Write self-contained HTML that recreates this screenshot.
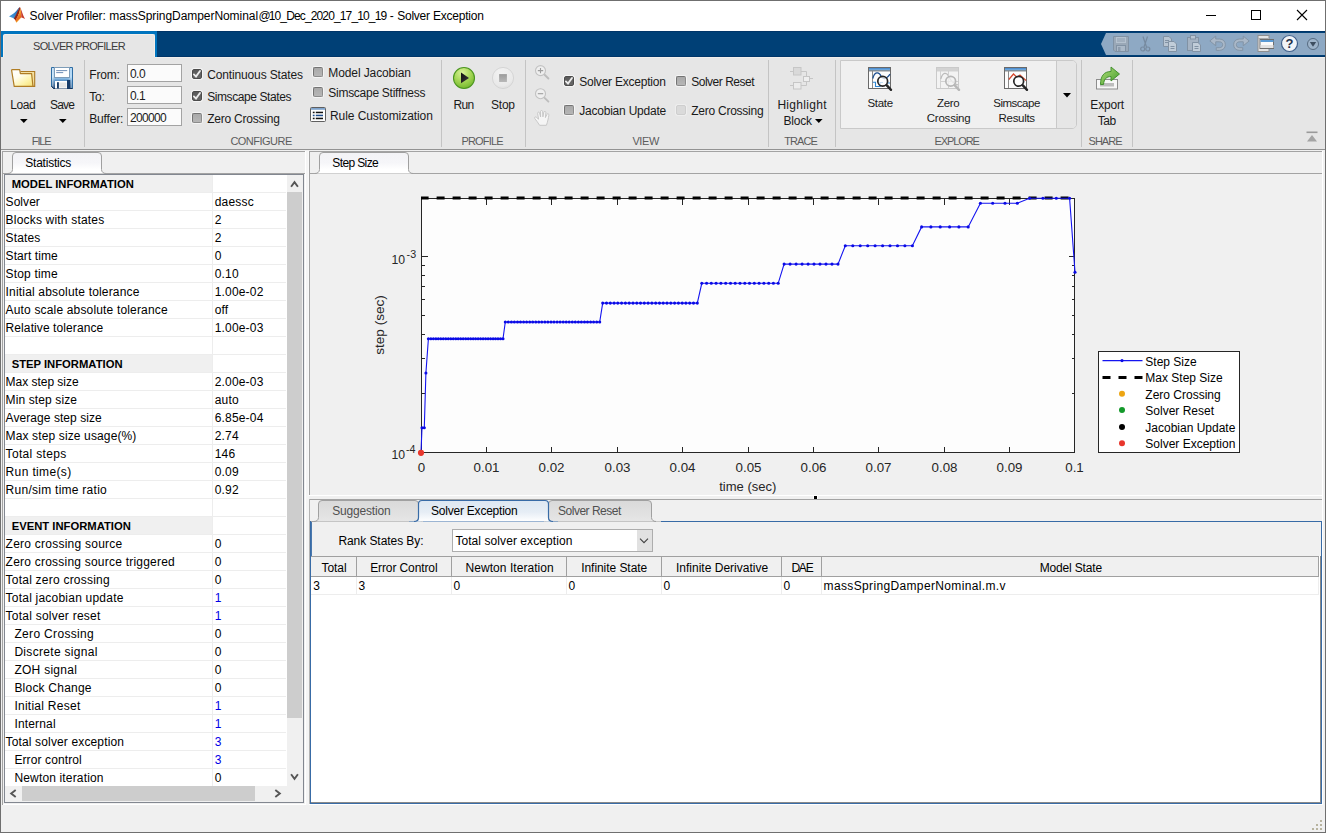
<!DOCTYPE html>
<html>
<head>
<meta charset="utf-8">
<title>Solver Profiler</title>
<style>
*{box-sizing:border-box;margin:0;padding:0}
html,body{width:1326px;height:833px;overflow:hidden;background:#f0f0f0}
body{position:relative;font-family:"Liberation Sans","DejaVu Sans",sans-serif;font-size:12px;color:#000}
.a{position:absolute}
.t{position:absolute;white-space:nowrap;line-height:1}
</style>
</head>
<body>
<!-- window frame -->
<div class="a" id="titlebar" style="left:0;top:0;width:1326px;height:31px;background:#fff"></div>
<div class="a" style="left:0;top:0;width:1326px;height:1px;background:#6f6f6f"></div>
<div class="a" style="left:0;top:0;width:1px;height:833px;background:#6f6f6f"></div>
<div class="a" style="left:1325px;top:0;width:1px;height:833px;background:#6f6f6f"></div>
<div class="a" style="left:0;top:832px;width:1326px;height:1px;background:#6f6f6f"></div>

<!-- TITLE -->
<svg class="a" style="left:8px;top:6px" width="19" height="18" viewBox="8 6 19 18">
<defs><linearGradient id="lg1" x1="0" y1="0" x2="0.3" y2="1"><stop offset="0" stop-color="#f0902a"/><stop offset="0.5" stop-color="#f2a030"/><stop offset="0.8" stop-color="#e8641e"/><stop offset="1" stop-color="#f5b82a"/></linearGradient>
<linearGradient id="lg2" x1="0" y1="1" x2="1" y2="0"><stop offset="0" stop-color="#4a9fdc"/><stop offset="0.6" stop-color="#2f7cc4"/><stop offset="1" stop-color="#27508f"/></linearGradient></defs>
<path d="M9 16.6 C11 15 13.3 14 14.8 12.6 C16.4 11 18.2 8.6 19.6 7 L17.6 12.6 L14.3 18.9 C12.6 17.8 11 17.2 9 16.6 Z" fill="url(#lg2)"/>
<path d="M19.7 7 C18.3 10 16.3 14.4 13.9 18.6 L15.6 20.6 C17.9 17 19.8 12 20.4 8 Z" fill="#8f2417"/>
<path d="M20.2 7.4 C19.9 11 18.6 15.6 15.3 20.2 L16.3 22.7 C18.5 21 20 18.6 21.4 17.3 C21.6 14 21.1 10 20.1 7.4 Z" fill="url(#lg1)"/>
<path d="M20 7.1 C21.6 10 22.6 15 25 19 C23.6 18 22.4 17.5 21.3 17.4 C21.5 14 20.9 10 20 7.1 Z" fill="#c63a2a"/>
</svg>
<div class="t" style="left:29.60px;top:10.00px;font-size:12px;letter-spacing:-0.168px;color:#000;">Solver Profiler:</div>
<div class="t" style="left:109.30px;top:10.00px;font-size:12px;letter-spacing:-0.059px;color:#000;">massSpringDamperNominal</div>
<div class="t" style="left:258.40px;top:10.00px;font-size:12px;letter-spacing:-0.582px;color:#000;">@</div>
<div class="t" style="left:268.70px;top:10.00px;font-size:12px;letter-spacing:-0.860px;color:#000;">10_Dec_2020_17_10_19</div>
<div class="t" style="left:389.70px;top:10.00px;font-size:12px;letter-spacing:0.504px;color:#000;">-</div>
<div class="t" style="left:397.20px;top:10.00px;font-size:12px;letter-spacing:-0.228px;color:#000;">Solver Exception</div>
<svg class="a" style="left:1195px;top:1px" width="130" height="30" viewBox="0 0 130 30" shape-rendering="crispEdges">
<rect x="11" y="14" width="10" height="1" fill="#000"/>
<rect x="56.5" y="9.5" width="9" height="9" fill="none" stroke="#000" stroke-width="1"/>
<g shape-rendering="auto"><path d="M102 9 L112 19 M112 9 L102 19" stroke="#000" stroke-width="1.1" fill="none"/></g>
</svg>
<div class="a" style="left:1px;top:31px;width:1324px;height:26px;background:#004076;"></div>
<div class="a" style="left:1px;top:31px;width:156px;height:26px;background:#0075bf;"></div>
<div class="a" style="left:1px;top:31px;width:1324px;height:1px;background:#003568;"></div>
<div class="a" style="left:157px;top:56px;width:1168px;height:1px;background:#003568;"></div>
<div class="a" style="left:1px;top:31px;width:156px;height:1px;background:#0072bd;"></div>
<div class="a" style="left:3px;top:34px;width:152px;height:23px;background:#e6e6e6;border-radius:2px 2px 0 0;border-top:1px solid #f4efea;border-right:1px solid #f4efea;border-left:1px solid #f4efea;"></div>
<div class="t" style="left:33.00px;top:41.00px;font-size:11px;letter-spacing:-0.659px;color:#3c3c3c;">SOLVER PROFILER</div>
<svg class="a" style="left:1100px;top:33px" width="225" height="22" viewBox="0 0 225 22">
<path d="M1 11 L6 0 H225 V22 H6 Z" fill="#8ea9c4"/>
<g opacity="0.72">
<!-- save -->
<g transform="translate(13,3)"><path d="M0.5 0.5 H15.5 V15.5 H2 L0.5 14 Z" fill="#9fa8b3" stroke="#7d8a99"/><rect x="3" y="1" width="10" height="6" fill="#c5ccd4"/><rect x="4" y="2.5" width="8" height="1" fill="#8d98a5"/><rect x="4" y="4.5" width="8" height="1" fill="#8d98a5"/><rect x="3.5" y="9.5" width="9" height="6" fill="#b7c0ca" stroke="#7d8a99"/><rect x="5" y="11" width="2.5" height="4" fill="#8d98a5"/></g>
<!-- cut -->
<g transform="translate(39,3)" fill="none" stroke="#6e7f92" stroke-width="1.2"><path d="M4 0.5 L7.5 11 M8.5 0.5 L5 11"/><circle cx="3.7" cy="13" r="2"/><circle cx="8.8" cy="13" r="2"/></g>
<!-- copy -->
<g transform="translate(63,3)"><path d="M0.5 0.5 H6 L8.5 3 V10.5 H0.5 Z" fill="#c9d0d8" stroke="#7d8a99"/><path d="M5.5 5.5 H11 L13.5 8 V15.5 H5.5 Z" fill="#d5dbe2" stroke="#7d8a99"/><path d="M2 4.5H6M2 6.5H5M7.5 10.5H11.5M7.5 12.5H11.5" stroke="#7d8a99"/></g>
<!-- paste -->
<g transform="translate(87,2)"><rect x="0.5" y="2.5" width="11" height="13" fill="#aeb8c3" stroke="#7d8a99"/><rect x="3.5" y="0.5" width="5" height="3.5" fill="#c9d0d8" stroke="#7d8a99"/><path d="M5.5 7.5 H11 L13.5 10 V16.5 H5.5 Z" fill="#d5dbe2" stroke="#7d8a99"/><path d="M7.5 11.5H11.5M7.5 13.5H11.5" stroke="#7d8a99"/></g>
<!-- undo -->
<g transform="translate(109.3,2.6) scale(1.07)"><path d="M0.5 5 L6 0.5 V3.2 H9.5 C13 3.2 15 5.5 15 8.5 C15 11.5 13 13.8 9.5 13.8 H6.5 V11.3 H9.3 C11.4 11.3 12.5 10.2 12.5 8.5 C12.5 6.8 11.4 5.8 9.3 5.8 H6 V9.5 Z" fill="#b5bfca" stroke="#7d8a99" stroke-width="0.9"/></g>
<!-- redo -->
<g transform="translate(149.7,2.6) scale(-1.07,1.07)"><path d="M0.5 5 L6 0.5 V3.2 H9.5 C13 3.2 15 5.5 15 8.5 C15 11.5 13 13.8 9.5 13.8 H6.5 V11.3 H9.3 C11.4 11.3 12.5 10.2 12.5 8.5 C12.5 6.8 11.4 5.8 9.3 5.8 H6 V9.5 Z" fill="#b5bfca" stroke="#7d8a99" stroke-width="0.9"/></g>
</g>
<!-- window switch -->
<g transform="translate(156.5,2)"><rect x="1.5" y="0.5" width="11" height="16" fill="#e4e4e4" stroke="#8f8f8f"/><path d="M2 3.5 H12" stroke="#a9a9a9"/><rect x="3.5" y="4.5" width="13.5" height="9" fill="#fafafa" stroke="#6e6e6e"/><rect x="4" y="5" width="13" height="2" fill="#5b9bd5"/><rect x="4" y="10" width="13" height="3" fill="#e2e2e2"/></g>
<!-- help -->
<g transform="translate(181,2)"><circle cx="8.5" cy="8.5" r="8" fill="#f2f4f7" stroke="#3f5f8a" stroke-width="1.2"/><text x="8.5" y="13" font-family="Liberation Sans, sans-serif" font-size="13" font-weight="bold" text-anchor="middle" fill="#1f2f4a">?</text></g>
<!-- dropdown -->
<g transform="translate(207,5)"><circle cx="6" cy="6" r="5.5" fill="#9eb4ca" stroke="#566a80" stroke-width="1"/><path d="M2.8 4 H9.2 L6 8.8 Z" fill="#3e4e60"/></g>
</svg>

<!-- TABBAR -->

<!-- TOOLSTRIP -->
<div class="a" style="left:1px;top:57px;width:1324px;height:92px;background:#e6e6e6;"></div>
<div class="a" style="left:155px;top:57px;width:1170px;height:1px;background:#f1eeeb;"></div>
<div class="a" style="left:1px;top:149px;width:1324px;height:1px;background:#929292;"></div>
<svg class="a" style="left:10px;top:67px" width="27" height="22" viewBox="10 67 27 22">
<defs><linearGradient id="fo1" x1="0.1" y1="0" x2="0.9" y2="1"><stop offset="0" stop-color="#ffffff"/><stop offset="0.35" stop-color="#fffdf0"/><stop offset="0.75" stop-color="#fdf2a4"/><stop offset="1" stop-color="#f6e27c"/></linearGradient></defs>
<path d="M20.5 71.5 H34.7 V86.4 H32.5" fill="#f3dfa0" stroke="#ad7a22" stroke-width="1.1"/>
<path d="M12 69.6 H19.7 L20.4 73.7 H31.6 L33 86.4 H14.2 L11.6 70.2 Z" fill="url(#fo1)" stroke="#b07d24" stroke-width="1.2" stroke-linejoin="round"/>
</svg>
<svg class="a" style="left:51px;top:67px" width="22" height="22" viewBox="0 0 22 22">
<defs><linearGradient id="sv1" x1="0" y1="0" x2="0" y2="1"><stop offset="0" stop-color="#9cc8ec"/><stop offset="0.45" stop-color="#a9d3f3"/><stop offset="0.62" stop-color="#5e95c8"/><stop offset="1" stop-color="#173c69"/></linearGradient>
<linearGradient id="sv2" x1="0" y1="0" x2="1" y2="0"><stop offset="0" stop-color="#ffffff" stop-opacity="0.55"/><stop offset="0.15" stop-color="#ffffff" stop-opacity="0"/><stop offset="0.8" stop-color="#ffffff" stop-opacity="0"/><stop offset="1" stop-color="#bfe0fa" stop-opacity="0.6"/></linearGradient></defs>
<path d="M0.5 0.5 H21.5 V21.5 H2.5 L0.5 19.5 Z" fill="url(#sv1)" stroke="#2e6da4" stroke-width="1"/>
<path d="M1 1 H21 V21 H3 L1 19 Z" fill="url(#sv2)"/>
<path d="M0.5 19.5 L2.5 21.5 H21.5" fill="none" stroke="#12335c" stroke-width="1"/>
<rect x="3.5" y="0.5" width="15" height="10" fill="#ffffff" stroke="#7d9cb8" stroke-width="1"/>
<rect x="5.2" y="3.2" width="11" height="0.9" fill="#5f82ad"/><rect x="5.2" y="5.2" width="7" height="0.9" fill="#5f82ad"/>
<rect x="16" y="13" width="3.2" height="8.5" fill="#173c69"/>
<rect x="4" y="14" width="12" height="7.5" fill="#ffffff"/>
<rect x="6" y="15.2" width="1.9" height="6.3" fill="#173c69"/>
<rect x="8.3" y="15.5" width="7.2" height="5" fill="#e6e6e6"/>
</svg>
<div class="t" style="left:10.30px;top:99.00px;font-size:12px;letter-spacing:-0.399px;color:#1a1a1a;">Load</div>
<div class="t" style="left:50.10px;top:99.00px;font-size:12px;letter-spacing:-0.863px;color:#1a1a1a;">Save</div>
<svg class="a" style="left:20.2px;top:118.5px" width="7.6" height="4" viewBox="0 0 7.6 4"><path d="M0 0 H7.6 L3.8 4 Z" fill="#000"/></svg>
<svg class="a" style="left:59.2px;top:118.5px" width="7.6" height="4" viewBox="0 0 7.6 4"><path d="M0 0 H7.6 L3.8 4 Z" fill="#000"/></svg>
<div class="t" style="left:31.80px;top:136.00px;font-size:11px;letter-spacing:-1.108px;color:#5c5c5c;">FILE</div>
<div class="a" style="left:84px;top:60px;width:1px;height:87px;background:#c4c4c4;"></div>
<div class="t" style="left:89.30px;top:69.00px;font-size:12px;letter-spacing:-0.206px;color:#1a1a1a;">From:</div>
<div class="t" style="left:89.30px;top:91.00px;font-size:12px;letter-spacing:-0.236px;color:#1a1a1a;">To:</div>
<div class="t" style="left:89.30px;top:113.00px;font-size:12px;letter-spacing:-0.176px;color:#1a1a1a;">Buffer:</div>
<div class="a" style="left:127px;top:64px;width:55px;height:18px;background:#fbfbfb;border:1px solid #a3a3a3;"></div>
<div class="a" style="left:127px;top:86px;width:55px;height:18px;background:#fbfbfb;border:1px solid #a3a3a3;"></div>
<div class="a" style="left:127px;top:108px;width:55px;height:18px;background:#fbfbfb;border:1px solid #a3a3a3;"></div>
<div class="t" style="left:130.00px;top:68.00px;font-size:12px;letter-spacing:-0.561px;color:#1a1a1a;">0.0</div>
<div class="t" style="left:130.00px;top:90.00px;font-size:12px;letter-spacing:-0.561px;color:#1a1a1a;">0.1</div>
<div class="t" style="left:130.00px;top:112.00px;font-size:12px;letter-spacing:-0.691px;color:#1a1a1a;">200000</div>
<div class="a" style="left:191px;top:68px;width:12px;height:12px;background:#f5f5f5;border-radius:3px"></div><div class="a" style="left:192px;top:69px;width:10px;height:10px;background:linear-gradient(#5a5a5a,#686868);border:1px solid #4c4c4c;border-radius:2px"></div><svg class="a" style="left:192px;top:69px" width="10" height="10" viewBox="0 0 10 10"><path d="M1.9 5.4 L4 7.6 L8 2" fill="none" stroke="#ececec" stroke-width="1.9" stroke-linecap="round"/></svg>
<div class="a" style="left:191px;top:90px;width:12px;height:12px;background:#f5f5f5;border-radius:3px"></div><div class="a" style="left:192px;top:91px;width:10px;height:10px;background:linear-gradient(#5a5a5a,#686868);border:1px solid #4c4c4c;border-radius:2px"></div><svg class="a" style="left:192px;top:91px" width="10" height="10" viewBox="0 0 10 10"><path d="M1.9 5.4 L4 7.6 L8 2" fill="none" stroke="#ececec" stroke-width="1.9" stroke-linecap="round"/></svg>
<div class="a" style="left:191px;top:112px;width:12px;height:12px;background:#f5f5f5;border-radius:3px"></div><div class="a" style="left:192px;top:113px;width:10px;height:10px;background:linear-gradient(#a9a9a9,#b6b6b6);border:1px solid #747474;border-bottom-color:#8c8c8c;border-right-color:#8c8c8c;border-radius:2px"></div>
<div class="t" style="left:207.20px;top:69.00px;font-size:12px;letter-spacing:-0.139px;color:#1a1a1a;">Continuous States</div>
<div class="t" style="left:207.20px;top:91.00px;font-size:12px;letter-spacing:-0.416px;color:#1a1a1a;">Simscape States</div>
<div class="t" style="left:207.20px;top:113.00px;font-size:12px;letter-spacing:-0.228px;color:#1a1a1a;">Zero Crossing</div>
<div class="a" style="left:312px;top:66px;width:12px;height:12px;background:#f5f5f5;border-radius:3px"></div><div class="a" style="left:313px;top:67px;width:10px;height:10px;background:linear-gradient(#a9a9a9,#b6b6b6);border:1px solid #747474;border-bottom-color:#8c8c8c;border-right-color:#8c8c8c;border-radius:2px"></div>
<div class="a" style="left:312px;top:86px;width:12px;height:12px;background:#f5f5f5;border-radius:3px"></div><div class="a" style="left:313px;top:87px;width:10px;height:10px;background:linear-gradient(#a9a9a9,#b6b6b6);border:1px solid #747474;border-bottom-color:#8c8c8c;border-right-color:#8c8c8c;border-radius:2px"></div>
<div class="t" style="left:328.30px;top:67.00px;font-size:12px;letter-spacing:-0.104px;color:#1a1a1a;">Model Jacobian</div>
<div class="t" style="left:328.30px;top:87.00px;font-size:12px;letter-spacing:-0.274px;color:#1a1a1a;">Simscape Stiffness</div>
<svg class="a" style="left:310px;top:107px" width="16" height="15" viewBox="0 0 16 15">
<rect x="0.5" y="0.5" width="15" height="14" rx="1" fill="#fdfdfd" stroke="#5f5f5f"/>
<rect x="1" y="1" width="14" height="1.8" fill="#7ea3cc"/>
<rect x="2.8" y="4.7" width="1.8" height="1.5" fill="#111"/><rect x="5.8" y="4.7" width="7.2" height="1.5" fill="#111"/>
<rect x="2.8" y="7.7" width="1.8" height="1.5" fill="#1f4e8c"/><rect x="5.8" y="7.7" width="7.2" height="1.5" fill="#1f4e8c"/>
<rect x="2.8" y="10.7" width="1.8" height="1.5" fill="#111"/><rect x="5.8" y="10.7" width="7.2" height="1.5" fill="#111"/>
</svg>
<div class="t" style="left:330.00px;top:110.00px;font-size:12px;letter-spacing:-0.069px;color:#1a1a1a;">Rule Customization</div>
<div class="t" style="left:230.40px;top:136.00px;font-size:11px;letter-spacing:-0.522px;color:#5c5c5c;">CONFIGURE</div>
<div class="a" style="left:441px;top:60px;width:1px;height:87px;background:#c4c4c4;"></div>
<svg class="a" style="left:452px;top:66px" width="24" height="24" viewBox="452 66 24 24">
<defs><radialGradient id="rg1" cx="0.42" cy="0.25" r="0.85"><stop offset="0" stop-color="#d9f29a"/><stop offset="0.45" stop-color="#a9d95a"/><stop offset="0.8" stop-color="#7fbf36"/><stop offset="1" stop-color="#5fa524"/></radialGradient>
<linearGradient id="rg1b" x1="0" y1="0" x2="1" y2="1"><stop offset="0" stop-color="#111"/><stop offset="1" stop-color="#3a3a3a"/></linearGradient></defs>
<circle cx="464" cy="78" r="10.5" fill="url(#rg1)" stroke="#4c9620" stroke-width="1.1"/>
<path d="M461 72.6 L469 77.9 L461 83.2 Z" fill="url(#rg1b)"/>
</svg>
<svg class="a" style="left:491px;top:66px" width="24" height="24" viewBox="491 66 24 24">
<defs><radialGradient id="rg2" cx="0.45" cy="0.3" r="0.8"><stop offset="0" stop-color="#f3f3f3"/><stop offset="0.7" stop-color="#e9e9e9"/><stop offset="1" stop-color="#d6d6d6"/></radialGradient>
<linearGradient id="rg2b" x1="0" y1="0" x2="0" y2="1"><stop offset="0" stop-color="#9c9c9c"/><stop offset="1" stop-color="#b8b8b8"/></linearGradient></defs>
<circle cx="503" cy="78" r="10.6" fill="url(#rg2)" stroke="#d2d2d2" stroke-width="0.9"/>
<rect x="499.1" y="74.1" width="7.8" height="7.9" fill="url(#rg2b)"/>
</svg>
<div class="t" style="left:453.40px;top:99.00px;font-size:12px;letter-spacing:-0.605px;color:#1a1a1a;">Run</div>
<div class="t" style="left:491.10px;top:99.00px;font-size:12px;letter-spacing:-0.271px;color:#1a1a1a;">Stop</div>
<div class="t" style="left:461.40px;top:136.00px;font-size:11px;letter-spacing:-0.810px;color:#5c5c5c;">PROFILE</div>
<div class="a" style="left:525px;top:60px;width:1px;height:87px;background:#c4c4c4;"></div>
<svg class="a" style="left:533px;top:63px" width="19" height="65" viewBox="533 63 19 65" fill="none">
<path d="M544.6 74.8 L548.4 78.5" stroke="#bdbdbd" stroke-width="1.9" stroke-linecap="round"/>
<circle cx="540.5" cy="70.6" r="5" fill="#efefef" stroke="#c2c2c2" stroke-width="1.1"/>
<path d="M537.8 70.6 H543.2 M540.5 67.9 V73.3" stroke="#9e9e9e" stroke-width="1.1"/>
<path d="M544.6 97.9 L548.4 101.6" stroke="#bdbdbd" stroke-width="1.9" stroke-linecap="round"/>
<circle cx="540.5" cy="93.7" r="5" fill="#efefef" stroke="#c2c2c2" stroke-width="1.1"/>
<path d="M537.8 93.7 H543.2" stroke="#9e9e9e" stroke-width="1.1"/>
<path d="M539.6 125.3 C538 122.6 536.3 120.4 534.8 118.6 C534 117.5 535.2 116.4 536.3 117.2 L538.6 119.2 L537.6 113.4 C537.4 111.9 539.3 111.6 539.6 113 L540.6 117 L540.5 111.6 C540.5 110.1 542.5 110.1 542.6 111.6 L542.9 116.9 L543.8 112.3 C544.1 110.9 546 111.2 545.9 112.6 L545.4 117.6 L546.9 114.4 C547.5 113.2 549.2 113.8 548.9 115.1 C548.3 118 547.8 121.5 546.4 125.3 Z" fill="#f5f5f5" stroke="#c4c4c4" stroke-width="0.9" stroke-linejoin="round"/>
</svg>
<div class="a" style="left:563px;top:75px;width:12px;height:12px;background:#f5f5f5;border-radius:3px"></div><div class="a" style="left:564px;top:76px;width:10px;height:10px;background:linear-gradient(#5a5a5a,#686868);border:1px solid #4c4c4c;border-radius:2px"></div><svg class="a" style="left:564px;top:76px" width="10" height="10" viewBox="0 0 10 10"><path d="M1.9 5.4 L4 7.6 L8 2" fill="none" stroke="#ececec" stroke-width="1.9" stroke-linecap="round"/></svg>
<div class="a" style="left:563px;top:104px;width:12px;height:12px;background:#f5f5f5;border-radius:3px"></div><div class="a" style="left:564px;top:105px;width:10px;height:10px;background:linear-gradient(#a9a9a9,#b6b6b6);border:1px solid #747474;border-bottom-color:#8c8c8c;border-right-color:#8c8c8c;border-radius:2px"></div>
<div class="a" style="left:675px;top:75px;width:12px;height:12px;background:#f5f5f5;border-radius:3px"></div><div class="a" style="left:676px;top:76px;width:10px;height:10px;background:linear-gradient(#a9a9a9,#b6b6b6);border:1px solid #747474;border-bottom-color:#8c8c8c;border-right-color:#8c8c8c;border-radius:2px"></div>
<div class="a" style="left:675px;top:104px;width:12px;height:12px;background:#eeeeee;border-radius:3px"></div><div class="a" style="left:676px;top:105px;width:10px;height:10px;background:#dadada;border:1px solid #cecece;border-radius:2px"></div>
<div class="t" style="left:579.20px;top:76.00px;font-size:12px;letter-spacing:-0.222px;color:#1a1a1a;">Solver Exception</div>
<div class="t" style="left:579.20px;top:105.00px;font-size:12px;letter-spacing:-0.211px;color:#1a1a1a;">Jacobian Update</div>
<div class="t" style="left:691.20px;top:76.00px;font-size:12px;letter-spacing:-0.483px;color:#1a1a1a;">Solver Reset</div>
<div class="t" style="left:691.20px;top:105.00px;font-size:12px;letter-spacing:-0.243px;color:#1a1a1a;">Zero Crossing</div>
<div class="t" style="left:632.40px;top:136.00px;font-size:11px;letter-spacing:-0.378px;color:#5c5c5c;">VIEW</div>
<div class="a" style="left:768px;top:60px;width:1px;height:87px;background:#c4c4c4;"></div>
<svg class="a" style="left:789px;top:66px" width="25" height="24" viewBox="789 66 25 24" fill="none" stroke="#c6c6c6" stroke-width="1">
<path d="M790 71.5 H793 M801 71.5 H806.5 V76.5 M790 85.5 H793 M801 85.5 H806.5 V81.5 M809.5 78.5 H813"/>
<rect x="793.5" y="67.5" width="7.5" height="7.5" fill="#d9d9d9"/><rect x="793.5" y="82.5" width="7.5" height="6.5" fill="#ececec"/><rect x="803.5" y="76.5" width="6" height="5" fill="#efefef"/>
</svg>
<div class="t" style="left:777.40px;top:99.00px;font-size:12px;letter-spacing:0.301px;color:#1a1a1a;">Highlight</div>
<div class="t" style="left:783.40px;top:115.00px;font-size:12px;letter-spacing:-0.189px;color:#1a1a1a;">Block</div>
<svg class="a" style="left:815.4000000000001px;top:118.5px" width="7.6" height="4" viewBox="0 0 7.6 4"><path d="M0 0 H7.6 L3.8 4 Z" fill="#000"/></svg>
<div class="t" style="left:784.30px;top:136.00px;font-size:11px;letter-spacing:-0.956px;color:#5c5c5c;">TRACE</div>
<div class="a" style="left:835px;top:60px;width:1px;height:87px;background:#c4c4c4;"></div>
<div class="a" style="left:840px;top:60px;width:237px;height:69px;background:#f0f0f0;border:1px solid #c9c9c9;border-radius:0 5px 5px 0;"></div>
<div class="a" style="left:1056px;top:61px;width:20px;height:67px;background:#e6e6e6;border-left:1px solid #c9c9c9;border-radius:0 4px 4px 0;"></div>
<svg class="a" style="left:868px;top:66px" width="26" height="26" viewBox="0 -1 26 26"><g><rect x="0.5" y="0.5" width="22" height="21" fill="#fcfcfc" stroke="#6a6a6a"/><rect x="1" y="1" width="21" height="2.5" fill="#6aa5dc"/><rect x="1" y="1" width="21" height="1" fill="#4f8fd0"/><path d="M1 3.9 H22" stroke="#4a4a4a" stroke-width="0.8" fill="none"/><path d="M4.5 4 V21" stroke="#8a8a8a" stroke-width="1" fill="none"/><path d="M4.8 11.5 C6.5 4.5 11 4.5 13 9 C14.5 12.5 18 13 22 7.2" fill="none" stroke="#1d4f91" stroke-width="1.3"/><path d="M4.8 15.3 H7.5 V19.5 H12 V15.5 H15 M19 16 H22" fill="none" stroke="#2f86d2" stroke-width="1.1"/><circle cx="14.7" cy="14.3" r="4.9" fill="#ffffff" fill-opacity="0.72" stroke="#262626" stroke-width="1.7"/><path d="M18.6 18.2 L23 22.8" stroke="#262626" stroke-width="2.4" stroke-linecap="round"/></g></svg>
<svg class="a" style="left:936px;top:66px" width="26" height="26" viewBox="0 -1 26 26"><g opacity="0.28"><rect x="0.5" y="0.5" width="22" height="21" fill="#fcfcfc" stroke="#6a6a6a"/><rect x="1" y="1" width="21" height="2.5" fill="#8a8a8a"/><path d="M1 3.9 H22" stroke="#4a4a4a" stroke-width="0.8" fill="none"/><path d="M4.5 4 V21" stroke="#8a8a8a" stroke-width="1" fill="none"/><path d="M4.8 12 C6.5 5 10.5 5 12.5 9 C14 12.5 17 16.5 22 18" fill="none" stroke="#333" stroke-width="1.2"/><path d="M4.8 14.5 H22 M12.5 4 V21" stroke="#777" stroke-width="0.9"/><circle cx="14.7" cy="14.3" r="4.9" fill="#ffffff" fill-opacity="0.72" stroke="#262626" stroke-width="1.7"/><path d="M18.6 18.2 L23 22.8" stroke="#262626" stroke-width="2.4" stroke-linecap="round"/></g></svg>
<svg class="a" style="left:1004px;top:66px" width="26" height="26" viewBox="0 -1 26 26"><g><rect x="0.5" y="0.5" width="22" height="21" fill="#fcfcfc" stroke="#6a6a6a"/><rect x="1" y="1" width="21" height="2.5" fill="#6aa5dc"/><rect x="1" y="1" width="21" height="1" fill="#4f8fd0"/><path d="M1 3.9 H22" stroke="#4a4a4a" stroke-width="0.8" fill="none"/><path d="M4.5 4 V21" stroke="#8a8a8a" stroke-width="1" fill="none"/><path d="M4.8 12.5 L9.5 7 L13 10.5 L16 8 L22 13.5" fill="none" stroke="#d6452a" stroke-width="1.2"/><circle cx="14.7" cy="14.3" r="4.9" fill="#ffffff" fill-opacity="0.72" stroke="#262626" stroke-width="1.7"/><path d="M18.6 18.2 L23 22.8" stroke="#262626" stroke-width="2.4" stroke-linecap="round"/></g></svg>
<div class="t" style="left:867.50px;top:98.00px;font-size:11.5px;letter-spacing:-0.330px;color:#1a1a1a;">State</div>
<div class="t" style="left:937.00px;top:98.00px;font-size:11.5px;letter-spacing:-0.311px;color:#1a1a1a;">Zero</div>
<div class="t" style="left:926.70px;top:113.00px;font-size:11.5px;letter-spacing:-0.210px;color:#1a1a1a;">Crossing</div>
<div class="t" style="left:993.20px;top:98.00px;font-size:11.5px;letter-spacing:-0.474px;color:#1a1a1a;">Simscape</div>
<div class="t" style="left:998.60px;top:113.00px;font-size:11.5px;letter-spacing:-0.321px;color:#1a1a1a;">Results</div>
<svg class="a" style="left:1063.0px;top:93px" width="8" height="4.5" viewBox="0 0 8 4.5"><path d="M0 0 H8 L4.0 4.5 Z" fill="#000"/></svg>
<div class="t" style="left:934.60px;top:136.00px;font-size:11px;letter-spacing:-1.124px;color:#5c5c5c;">EXPLORE</div>
<div class="a" style="left:1081px;top:60px;width:1px;height:87px;background:#c4c4c4;"></div>
<svg class="a" style="left:1095px;top:64px" width="26" height="27" viewBox="0 0 26 27">
<defs><linearGradient id="ex1" x1="0" y1="0" x2="1" y2="1"><stop offset="0" stop-color="#b5e07a"/><stop offset="1" stop-color="#3f9a2a"/></linearGradient></defs>
<rect x="1.5" y="15.5" width="21" height="9.5" fill="#f7f7f7" stroke="#8d8d8d"/>
<rect x="5" y="19" width="14" height="3.5" fill="#bdbdbd"/>
<path d="M5.5 20.5 C5.5 12 9 7.5 16 7.5 V3 L24.5 10 L16 17 V12.5 C11.5 12.5 9 15 8.5 20.5 Z" fill="url(#ex1)" stroke="#3a8a26" stroke-width="0.9"/>
</svg>
<div class="t" style="left:1090.30px;top:99.00px;font-size:12px;letter-spacing:-0.164px;color:#1a1a1a;">Export</div>
<div class="t" style="left:1097.70px;top:115.00px;font-size:12px;letter-spacing:-0.483px;color:#1a1a1a;">Tab</div>
<div class="t" style="left:1088.60px;top:136.00px;font-size:11px;letter-spacing:-1.000px;color:#5c5c5c;">SHARE</div>
<div class="a" style="left:1132px;top:60px;width:1px;height:87px;background:#c4c4c4;"></div>
<svg class="a" style="left:1306px;top:131px" width="12" height="12" viewBox="0 0 12 12"><rect x="0.5" y="0.5" width="11" height="1.6" fill="#9a9a9a"/><path d="M1 10.5 L6 4 L11 10.5 Z" fill="#a4a4a4"/></svg>

<!-- LEFT -->
<div class="a" style="left:2px;top:151px;width:303px;height:1px;background:#a3a3a3;"></div>
<div class="a" style="left:2px;top:151px;width:1px;height:654px;background:#a3a3a3;"></div>
<div class="a" style="left:305px;top:151px;width:1px;height:654px;background:#fff;"></div>
<div class="a" style="left:3px;top:804px;width:303px;height:1px;background:#fff;"></div>
<div class="a" style="left:3px;top:173px;width:302px;height:1px;background:#a3a3a3;"></div>
<svg width="0" height="0" class="a"><defs><linearGradient id="tg0" x1="0" y1="0" x2="0" y2="1"><stop offset="0" stop-color="#f3f3f6"/><stop offset="0.5" stop-color="#f6f6f9"/><stop offset="0.8" stop-color="#ffffff"/></linearGradient></defs></svg>
<svg class="a" style="left:6px;top:151px" width="101" height="24" viewBox="6 151 101 24"><path d="M8.0 173.5 C10.5 173.5 12.5 172.0 12.5 169.5 L12.5 156.0 Q12.5 152.5 16.0 152.5 H98.0 Q101.5 152.5 101.5 156.0 L101.5 169.5 C101.5 172.0 103.5 173.5 106.0 173.5 Z" fill="url(#tg0)" stroke="none"/><path d="M8.0 173.5 C10.5 173.5 12.5 172.0 12.5 169.5 L12.5 156.0 Q12.5 152.5 16.0 152.5 H98.0 Q101.5 152.5 101.5 156.0 L101.5 169.5 C101.5 172.0 103.5 173.5 106.0 173.5" fill="none" stroke="#a0a0a0" stroke-width="1"/></svg>
<div class="t" style="left:25.30px;top:157.00px;font-size:12px;letter-spacing:-0.231px;color:#000;">Statistics</div>
<div class="a" style="left:4px;top:174px;width:300px;height:629px;background:#fff;border:1px solid #828790;"></div>
<div class="a" style="left:5px;top:192px;width:281px;height:1px;background:#ededed;"></div>
<div class="a" style="left:212px;top:175px;width:1px;height:18px;background:#ededed;"></div>
<div class="a" style="left:5px;top:175px;width:207px;height:17px;background:#f0f0f0;"></div>
<div class="t" style="left:11.70px;top:179.00px;font-size:11.25px;color:#000;font-weight:bold;">MODEL INFORMATION</div>
<div class="a" style="left:5px;top:210px;width:281px;height:1px;background:#ededed;"></div>
<div class="a" style="left:212px;top:193px;width:1px;height:18px;background:#ededed;"></div>
<div class="t" style="left:5.60px;top:196.00px;font-size:12px;letter-spacing:0.048px;color:#000;">Solver</div>
<div class="t" style="left:214.70px;top:196.00px;font-size:12px;letter-spacing:0.190px;color:#000;">daessc</div>
<div class="a" style="left:5px;top:228px;width:281px;height:1px;background:#ededed;"></div>
<div class="a" style="left:212px;top:211px;width:1px;height:18px;background:#ededed;"></div>
<div class="t" style="left:5.60px;top:214.00px;font-size:12px;letter-spacing:0.191px;color:#000;">Blocks with states</div>
<div class="t" style="left:214.70px;top:214.00px;font-size:12px;letter-spacing:0.200px;color:#000;">2</div>
<div class="a" style="left:5px;top:246px;width:281px;height:1px;background:#ededed;"></div>
<div class="a" style="left:212px;top:229px;width:1px;height:18px;background:#ededed;"></div>
<div class="t" style="left:5.60px;top:232.00px;font-size:12px;letter-spacing:0.113px;color:#000;">States</div>
<div class="t" style="left:214.70px;top:232.00px;font-size:12px;letter-spacing:0.200px;color:#000;">2</div>
<div class="a" style="left:5px;top:264px;width:281px;height:1px;background:#ededed;"></div>
<div class="a" style="left:212px;top:247px;width:1px;height:18px;background:#ededed;"></div>
<div class="t" style="left:5.60px;top:250.00px;font-size:12px;letter-spacing:0.085px;color:#000;">Start time</div>
<div class="t" style="left:214.70px;top:250.00px;font-size:12px;letter-spacing:0.200px;color:#000;">0</div>
<div class="a" style="left:5px;top:282px;width:281px;height:1px;background:#ededed;"></div>
<div class="a" style="left:212px;top:265px;width:1px;height:18px;background:#ededed;"></div>
<div class="t" style="left:5.60px;top:268.00px;font-size:12px;letter-spacing:0.168px;color:#000;">Stop time</div>
<div class="t" style="left:214.70px;top:268.00px;font-size:12px;letter-spacing:0.175px;color:#000;">0.10</div>
<div class="a" style="left:5px;top:300px;width:281px;height:1px;background:#ededed;"></div>
<div class="a" style="left:212px;top:283px;width:1px;height:18px;background:#ededed;"></div>
<div class="t" style="left:5.60px;top:286.00px;font-size:12px;letter-spacing:0.176px;color:#000;">Initial absolute tolerance</div>
<div class="t" style="left:214.70px;top:286.00px;font-size:12px;letter-spacing:0.178px;color:#000;">1.00e-02</div>
<div class="a" style="left:5px;top:318px;width:281px;height:1px;background:#ededed;"></div>
<div class="a" style="left:212px;top:301px;width:1px;height:18px;background:#ededed;"></div>
<div class="t" style="left:5.60px;top:304.00px;font-size:12px;letter-spacing:0.164px;color:#000;">Auto scale absolute tolerance</div>
<div class="t" style="left:214.70px;top:304.00px;font-size:12px;letter-spacing:0.131px;color:#000;">off</div>
<div class="a" style="left:5px;top:336px;width:281px;height:1px;background:#ededed;"></div>
<div class="a" style="left:212px;top:319px;width:1px;height:18px;background:#ededed;"></div>
<div class="t" style="left:5.60px;top:322.00px;font-size:12px;letter-spacing:0.091px;color:#000;">Relative tolerance</div>
<div class="t" style="left:214.70px;top:322.00px;font-size:12px;letter-spacing:0.178px;color:#000;">1.00e-03</div>
<div class="a" style="left:5px;top:354px;width:281px;height:1px;background:#ededed;"></div>
<div class="a" style="left:212px;top:337px;width:1px;height:18px;background:#ededed;"></div>
<div class="a" style="left:5px;top:372px;width:281px;height:1px;background:#ededed;"></div>
<div class="a" style="left:212px;top:355px;width:1px;height:18px;background:#ededed;"></div>
<div class="a" style="left:5px;top:355px;width:207px;height:17px;background:#f0f0f0;"></div>
<div class="t" style="left:11.70px;top:359.00px;font-size:11.25px;color:#000;font-weight:bold;">STEP INFORMATION</div>
<div class="a" style="left:5px;top:390px;width:281px;height:1px;background:#ededed;"></div>
<div class="a" style="left:212px;top:373px;width:1px;height:18px;background:#ededed;"></div>
<div class="t" style="left:5.60px;top:376.00px;font-size:12px;letter-spacing:-0.028px;color:#000;">Max step size</div>
<div class="t" style="left:214.70px;top:376.00px;font-size:12px;letter-spacing:0.178px;color:#000;">2.00e-03</div>
<div class="a" style="left:5px;top:408px;width:281px;height:1px;background:#ededed;"></div>
<div class="a" style="left:212px;top:391px;width:1px;height:18px;background:#ededed;"></div>
<div class="t" style="left:5.60px;top:394.00px;font-size:12px;letter-spacing:0.113px;color:#000;">Min step size</div>
<div class="t" style="left:214.70px;top:394.00px;font-size:12px;letter-spacing:0.175px;color:#000;">auto</div>
<div class="a" style="left:5px;top:426px;width:281px;height:1px;background:#ededed;"></div>
<div class="a" style="left:212px;top:409px;width:1px;height:18px;background:#ededed;"></div>
<div class="t" style="left:5.60px;top:412.00px;font-size:12px;letter-spacing:0.061px;color:#000;">Average step size</div>
<div class="t" style="left:214.70px;top:412.00px;font-size:12px;letter-spacing:0.178px;color:#000;">6.85e-04</div>
<div class="a" style="left:5px;top:444px;width:281px;height:1px;background:#ededed;"></div>
<div class="a" style="left:212px;top:427px;width:1px;height:18px;background:#ededed;"></div>
<div class="t" style="left:5.60px;top:430.00px;font-size:12px;letter-spacing:0.129px;color:#000;">Max step size usage(%)</div>
<div class="t" style="left:214.70px;top:430.00px;font-size:12px;letter-spacing:0.175px;color:#000;">2.74</div>
<div class="a" style="left:5px;top:462px;width:281px;height:1px;background:#ededed;"></div>
<div class="a" style="left:212px;top:445px;width:1px;height:18px;background:#ededed;"></div>
<div class="t" style="left:5.60px;top:448.00px;font-size:12px;letter-spacing:0.322px;color:#000;">Total steps</div>
<div class="t" style="left:214.70px;top:448.00px;font-size:12px;letter-spacing:0.200px;color:#000;">146</div>
<div class="a" style="left:5px;top:480px;width:281px;height:1px;background:#ededed;"></div>
<div class="a" style="left:212px;top:463px;width:1px;height:18px;background:#ededed;"></div>
<div class="t" style="left:5.60px;top:466.00px;font-size:12px;letter-spacing:0.363px;color:#000;">Run time(s)</div>
<div class="t" style="left:214.70px;top:466.00px;font-size:12px;letter-spacing:0.175px;color:#000;">0.09</div>
<div class="a" style="left:5px;top:498px;width:281px;height:1px;background:#ededed;"></div>
<div class="a" style="left:212px;top:481px;width:1px;height:18px;background:#ededed;"></div>
<div class="t" style="left:5.60px;top:484.00px;font-size:12px;letter-spacing:0.262px;color:#000;">Run/sim time ratio</div>
<div class="t" style="left:214.70px;top:484.00px;font-size:12px;letter-spacing:0.175px;color:#000;">0.92</div>
<div class="a" style="left:5px;top:516px;width:281px;height:1px;background:#ededed;"></div>
<div class="a" style="left:212px;top:499px;width:1px;height:18px;background:#ededed;"></div>
<div class="a" style="left:5px;top:534px;width:281px;height:1px;background:#ededed;"></div>
<div class="a" style="left:212px;top:517px;width:1px;height:18px;background:#ededed;"></div>
<div class="a" style="left:5px;top:517px;width:207px;height:17px;background:#f0f0f0;"></div>
<div class="t" style="left:11.70px;top:521.00px;font-size:11.25px;color:#000;font-weight:bold;">EVENT INFORMATION</div>
<div class="a" style="left:5px;top:552px;width:281px;height:1px;background:#ededed;"></div>
<div class="a" style="left:212px;top:535px;width:1px;height:18px;background:#ededed;"></div>
<div class="t" style="left:5.60px;top:538.00px;font-size:12px;letter-spacing:0.243px;color:#000;">Zero crossing source</div>
<div class="t" style="left:214.70px;top:538.00px;font-size:12px;letter-spacing:0.200px;color:#000;">0</div>
<div class="a" style="left:5px;top:570px;width:281px;height:1px;background:#ededed;"></div>
<div class="a" style="left:212px;top:553px;width:1px;height:18px;background:#ededed;"></div>
<div class="t" style="left:5.60px;top:556.00px;font-size:12px;letter-spacing:0.222px;color:#000;">Zero crossing source triggered</div>
<div class="t" style="left:214.70px;top:556.00px;font-size:12px;letter-spacing:0.200px;color:#000;">0</div>
<div class="a" style="left:5px;top:588px;width:281px;height:1px;background:#ededed;"></div>
<div class="a" style="left:212px;top:571px;width:1px;height:18px;background:#ededed;"></div>
<div class="t" style="left:5.60px;top:574.00px;font-size:12px;letter-spacing:0.224px;color:#000;">Total zero crossing</div>
<div class="t" style="left:214.70px;top:574.00px;font-size:12px;letter-spacing:0.200px;color:#000;">0</div>
<div class="a" style="left:5px;top:606px;width:281px;height:1px;background:#ededed;"></div>
<div class="a" style="left:212px;top:589px;width:1px;height:18px;background:#ededed;"></div>
<div class="t" style="left:5.60px;top:592.00px;font-size:12px;letter-spacing:0.218px;color:#000;">Total jacobian update</div>
<div class="t" style="left:214.70px;top:592.00px;font-size:12px;letter-spacing:0.200px;color:#0000e6;">1</div>
<div class="a" style="left:5px;top:624px;width:281px;height:1px;background:#ededed;"></div>
<div class="a" style="left:212px;top:607px;width:1px;height:18px;background:#ededed;"></div>
<div class="t" style="left:5.60px;top:610.00px;font-size:12px;letter-spacing:0.233px;color:#000;">Total solver reset</div>
<div class="t" style="left:214.70px;top:610.00px;font-size:12px;letter-spacing:0.200px;color:#0000e6;">1</div>
<div class="a" style="left:5px;top:642px;width:281px;height:1px;background:#ededed;"></div>
<div class="a" style="left:212px;top:625px;width:1px;height:18px;background:#ededed;"></div>
<div class="t" style="left:14.40px;top:628.00px;font-size:12px;letter-spacing:0.334px;color:#000;">Zero Crossing</div>
<div class="t" style="left:214.70px;top:628.00px;font-size:12px;letter-spacing:0.200px;color:#000;">0</div>
<div class="a" style="left:5px;top:660px;width:281px;height:1px;background:#ededed;"></div>
<div class="a" style="left:212px;top:643px;width:1px;height:18px;background:#ededed;"></div>
<div class="t" style="left:14.40px;top:646.00px;font-size:12px;letter-spacing:0.313px;color:#000;">Discrete signal</div>
<div class="t" style="left:214.70px;top:646.00px;font-size:12px;letter-spacing:0.200px;color:#000;">0</div>
<div class="a" style="left:5px;top:678px;width:281px;height:1px;background:#ededed;"></div>
<div class="a" style="left:212px;top:661px;width:1px;height:18px;background:#ededed;"></div>
<div class="t" style="left:14.40px;top:664.00px;font-size:12px;letter-spacing:0.268px;color:#000;">ZOH signal</div>
<div class="t" style="left:214.70px;top:664.00px;font-size:12px;letter-spacing:0.200px;color:#000;">0</div>
<div class="a" style="left:5px;top:696px;width:281px;height:1px;background:#ededed;"></div>
<div class="a" style="left:212px;top:679px;width:1px;height:18px;background:#ededed;"></div>
<div class="t" style="left:14.40px;top:682.00px;font-size:12px;letter-spacing:0.216px;color:#000;">Block Change</div>
<div class="t" style="left:214.70px;top:682.00px;font-size:12px;letter-spacing:0.200px;color:#000;">0</div>
<div class="a" style="left:5px;top:714px;width:281px;height:1px;background:#ededed;"></div>
<div class="a" style="left:212px;top:697px;width:1px;height:18px;background:#ededed;"></div>
<div class="t" style="left:14.40px;top:700.00px;font-size:12px;letter-spacing:0.262px;color:#000;">Initial Reset</div>
<div class="t" style="left:214.70px;top:700.00px;font-size:12px;letter-spacing:0.200px;color:#0000e6;">1</div>
<div class="a" style="left:5px;top:732px;width:281px;height:1px;background:#ededed;"></div>
<div class="a" style="left:212px;top:715px;width:1px;height:18px;background:#ededed;"></div>
<div class="t" style="left:14.40px;top:718.00px;font-size:12px;letter-spacing:0.172px;color:#000;">Internal</div>
<div class="t" style="left:214.70px;top:718.00px;font-size:12px;letter-spacing:0.200px;color:#0000e6;">1</div>
<div class="a" style="left:5px;top:750px;width:281px;height:1px;background:#ededed;"></div>
<div class="a" style="left:212px;top:733px;width:1px;height:18px;background:#ededed;"></div>
<div class="t" style="left:5.60px;top:736.00px;font-size:12px;letter-spacing:0.141px;color:#000;">Total solver exception</div>
<div class="t" style="left:214.70px;top:736.00px;font-size:12px;letter-spacing:0.200px;color:#0000e6;">3</div>
<div class="a" style="left:5px;top:768px;width:281px;height:1px;background:#ededed;"></div>
<div class="a" style="left:212px;top:751px;width:1px;height:18px;background:#ededed;"></div>
<div class="t" style="left:14.40px;top:754.00px;font-size:12px;letter-spacing:0.114px;color:#000;">Error control</div>
<div class="t" style="left:214.70px;top:754.00px;font-size:12px;letter-spacing:0.200px;color:#0000e6;">3</div>
<div class="a" style="left:5px;top:786px;width:281px;height:1px;background:#ededed;"></div>
<div class="a" style="left:212px;top:769px;width:1px;height:18px;background:#ededed;"></div>
<div class="t" style="left:14.40px;top:772.00px;font-size:12px;letter-spacing:0.162px;color:#000;">Newton iteration</div>
<div class="t" style="left:214.70px;top:772.00px;font-size:12px;letter-spacing:0.200px;color:#000;">0</div>
<div class="a" style="left:287px;top:175px;width:16px;height:611px;background:#f0f0f0;"></div>
<div class="a" style="left:287px;top:192px;width:15px;height:526px;background:#cdcdcd;"></div>
<svg class="a" style="left:290px;top:180px" width="9" height="8" viewBox="0 0 9 8"><path d="M1.1 6.7 L4.5 2.2 L7.9 6.7" fill="none" stroke="#555555" stroke-width="1.9"/></svg>
<svg class="a" style="left:290px;top:773px" width="9" height="8" viewBox="0 0 9 8"><path d="M1.1 1.3 L4.5 5.8 L7.9 1.3" fill="none" stroke="#555555" stroke-width="1.9"/></svg>
<div class="a" style="left:5px;top:786px;width:298px;height:16px;background:#f0f0f0;"></div>
<div class="a" style="left:22px;top:786px;width:233px;height:15px;background:#cdcdcd;"></div>
<svg class="a" style="left:9px;top:789px" width="8" height="9" viewBox="0 0 8 9"><path d="M6.7 1.1 L2.2 4.5 L6.7 7.9" fill="none" stroke="#555555" stroke-width="1.9"/></svg>
<svg class="a" style="left:274px;top:789px" width="8" height="9" viewBox="0 0 8 9"><path d="M1.3 1.1 L5.8 4.5 L1.3 7.9" fill="none" stroke="#555555" stroke-width="1.9"/></svg>

<!-- PLOT -->
<div class="a" style="left:309px;top:151px;width:1013px;height:345px;border-left:1px solid #a3a3a3;border-top:1px solid #a3a3a3;"></div>
<div class="a" style="left:310px;top:173px;width:1012px;height:1px;background:#a3a3a3;"></div>
<svg class="a" style="left:313px;top:151px" width="101" height="24" viewBox="313 151 101 24"><path d="M315.0 173.5 C317.5 173.5 319.5 172.0 319.5 169.5 L319.5 156.0 Q319.5 152.5 323.0 152.5 H405.0 Q408.5 152.5 408.5 156.0 L408.5 169.5 C408.5 172.0 410.5 173.5 413.0 173.5 Z" fill="url(#tg0)" stroke="none"/><path d="M315.0 173.5 C317.5 173.5 319.5 172.0 319.5 169.5 L319.5 156.0 Q319.5 152.5 323.0 152.5 H405.0 Q408.5 152.5 408.5 156.0 L408.5 169.5 C408.5 172.0 410.5 173.5 413.0 173.5" fill="none" stroke="#a0a0a0" stroke-width="1"/></svg>
<div class="t" style="left:332.30px;top:157.00px;font-size:12px;letter-spacing:-0.618px;color:#000;">Step Size</div>
<div class="a" style="left:309px;top:495px;width:1013px;height:1px;background:#fff;"></div>
<div class="a" style="left:813px;top:495px;width:5px;height:4px;background:#fff;"></div>
<div class="a" style="left:814px;top:496px;width:3px;height:3px;background:#000;"></div>
<div class="a" style="left:306px;top:151px;width:3px;height:654px;background:#f5f5f5;"></div>
<div class="a" style="left:308px;top:151px;width:1px;height:345px;background:#fafafa;"></div>
<div class="a" style="left:1322px;top:151px;width:1px;height:653px;background:#fff;"></div>
<svg class="a" style="left:310px;top:174px" width="1015" height="321" viewBox="310 174 1015 321" font-family="Liberation Sans, sans-serif">
<rect x="421.5" y="198.5" width="653.0" height="254.0" fill="#fdfdfd" stroke="#262626" stroke-width="1"/>
<path d="M486.5 452.5 v-6 M486.5 198.5 v6 M551.5 452.5 v-6 M551.5 198.5 v6 M617.5 452.5 v-6 M617.5 198.5 v6 M682.5 452.5 v-6 M682.5 198.5 v6 M748.5 452.5 v-6 M748.5 198.5 v6 M813.5 452.5 v-6 M813.5 198.5 v6 M878.5 452.5 v-6 M878.5 198.5 v6 M944.5 452.5 v-6 M944.5 198.5 v6 M1009.5 452.5 v-6 M1009.5 198.5 v6 M421.5 393.5 h3 M1074.5 393.5 h-3 M421.5 358.5 h3 M1074.5 358.5 h-3 M421.5 334.5 h3 M1074.5 334.5 h-3 M421.5 315.5 h3 M1074.5 315.5 h-3 M421.5 299.5 h3 M1074.5 299.5 h-3 M421.5 286.5 h3 M1074.5 286.5 h-3 M421.5 275.5 h3 M1074.5 275.5 h-3 M421.5 265.5 h3 M1074.5 265.5 h-3 M421.5 256.5 h6 M1074.5 256.5 h-6 M421.5 452.5 h6 M1074.5 452.5 h-6 " stroke="#262626" stroke-width="1" fill="none" shape-rendering="crispEdges"/>
<path d="M421 198 H1075" stroke="#000" stroke-width="3" stroke-dasharray="8 8" stroke-dashoffset="0.4" fill="none"/>
<polyline points="421.0,452.5 422.0,427.8 424.3,427.8 425.9,373.0 428.4,338.8 430.9,338.8 433.4,338.8 435.9,338.8 438.3,338.8 440.8,338.8 443.3,338.8 445.8,338.8 448.3,338.8 450.8,338.8 453.3,338.8 455.8,338.8 458.2,338.8 460.7,338.8 463.2,338.8 465.7,338.8 468.2,338.8 470.7,338.8 473.2,338.8 475.6,338.8 478.1,338.8 480.6,338.8 483.1,338.8 485.6,338.8 488.1,338.8 490.6,338.8 493.1,338.8 495.5,338.8 498.0,338.8 500.5,338.8 503.0,338.8 505.3,322.0 508.3,322.0 511.4,322.0 514.4,322.0 517.5,322.0 520.5,322.0 523.6,322.0 526.6,322.0 529.7,322.0 532.7,322.0 535.8,322.0 538.8,322.0 541.8,322.0 544.9,322.0 547.9,322.0 551.0,322.0 554.0,322.0 557.1,322.0 560.1,322.0 563.2,322.0 566.2,322.0 569.2,322.0 572.3,322.0 575.3,322.0 578.4,322.0 581.4,322.0 584.5,322.0 587.5,322.0 590.6,322.0 593.6,322.0 596.7,322.0 599.7,322.0 602.7,303.1 606.5,303.1 610.3,303.1 614.1,303.1 617.8,303.1 621.6,303.1 625.4,303.1 629.2,303.1 633.0,303.1 636.8,303.1 640.5,303.1 644.3,303.1 648.1,303.1 651.9,303.1 655.7,303.1 659.5,303.1 663.2,303.1 667.0,303.1 670.8,303.1 674.6,303.1 678.4,303.1 682.2,303.1 685.9,303.1 689.7,303.1 693.5,303.1 697.3,303.1 701.8,283.3 706.6,283.3 711.3,283.3 716.1,283.3 720.9,283.3 725.7,283.3 730.5,283.3 735.2,283.3 740.0,283.3 744.8,283.3 749.5,283.3 754.3,283.3 759.1,283.3 763.9,283.3 768.7,283.3 773.4,283.3 778.2,283.3 784.1,264.1 790.1,264.1 796.1,264.1 802.1,264.1 808.1,264.1 814.0,264.1 820.0,264.1 826.0,264.1 832.0,264.1 838.0,264.1 845.3,245.7 852.8,245.7 860.2,245.7 867.7,245.7 875.1,245.7 882.6,245.7 890.0,245.7 897.5,245.7 904.9,245.7 912.4,245.7 921.6,226.9 930.9,226.9 940.2,226.9 949.6,226.9 958.9,226.9 968.2,226.9 980.4,203.3 992.7,203.3 1005.0,203.3 1017.3,203.3 1029.6,198.3 1042.9,198.3 1056.3,198.3 1069.6,198.3 1075.0,272.2" fill="none" stroke="#1414f0" stroke-width="1.1"/>
<g fill="#0a0ae6"><circle cx="422.0" cy="427.8" r="1.55"/><circle cx="424.3" cy="427.8" r="1.55"/><circle cx="425.9" cy="373.0" r="1.55"/><circle cx="428.4" cy="338.8" r="1.55"/><circle cx="430.9" cy="338.8" r="1.55"/><circle cx="433.4" cy="338.8" r="1.55"/><circle cx="435.9" cy="338.8" r="1.55"/><circle cx="438.3" cy="338.8" r="1.55"/><circle cx="440.8" cy="338.8" r="1.55"/><circle cx="443.3" cy="338.8" r="1.55"/><circle cx="445.8" cy="338.8" r="1.55"/><circle cx="448.3" cy="338.8" r="1.55"/><circle cx="450.8" cy="338.8" r="1.55"/><circle cx="453.3" cy="338.8" r="1.55"/><circle cx="455.8" cy="338.8" r="1.55"/><circle cx="458.2" cy="338.8" r="1.55"/><circle cx="460.7" cy="338.8" r="1.55"/><circle cx="463.2" cy="338.8" r="1.55"/><circle cx="465.7" cy="338.8" r="1.55"/><circle cx="468.2" cy="338.8" r="1.55"/><circle cx="470.7" cy="338.8" r="1.55"/><circle cx="473.2" cy="338.8" r="1.55"/><circle cx="475.6" cy="338.8" r="1.55"/><circle cx="478.1" cy="338.8" r="1.55"/><circle cx="480.6" cy="338.8" r="1.55"/><circle cx="483.1" cy="338.8" r="1.55"/><circle cx="485.6" cy="338.8" r="1.55"/><circle cx="488.1" cy="338.8" r="1.55"/><circle cx="490.6" cy="338.8" r="1.55"/><circle cx="493.1" cy="338.8" r="1.55"/><circle cx="495.5" cy="338.8" r="1.55"/><circle cx="498.0" cy="338.8" r="1.55"/><circle cx="500.5" cy="338.8" r="1.55"/><circle cx="503.0" cy="338.8" r="1.55"/><circle cx="505.3" cy="322.0" r="1.55"/><circle cx="508.3" cy="322.0" r="1.55"/><circle cx="511.4" cy="322.0" r="1.55"/><circle cx="514.4" cy="322.0" r="1.55"/><circle cx="517.5" cy="322.0" r="1.55"/><circle cx="520.5" cy="322.0" r="1.55"/><circle cx="523.6" cy="322.0" r="1.55"/><circle cx="526.6" cy="322.0" r="1.55"/><circle cx="529.7" cy="322.0" r="1.55"/><circle cx="532.7" cy="322.0" r="1.55"/><circle cx="535.8" cy="322.0" r="1.55"/><circle cx="538.8" cy="322.0" r="1.55"/><circle cx="541.8" cy="322.0" r="1.55"/><circle cx="544.9" cy="322.0" r="1.55"/><circle cx="547.9" cy="322.0" r="1.55"/><circle cx="551.0" cy="322.0" r="1.55"/><circle cx="554.0" cy="322.0" r="1.55"/><circle cx="557.1" cy="322.0" r="1.55"/><circle cx="560.1" cy="322.0" r="1.55"/><circle cx="563.2" cy="322.0" r="1.55"/><circle cx="566.2" cy="322.0" r="1.55"/><circle cx="569.2" cy="322.0" r="1.55"/><circle cx="572.3" cy="322.0" r="1.55"/><circle cx="575.3" cy="322.0" r="1.55"/><circle cx="578.4" cy="322.0" r="1.55"/><circle cx="581.4" cy="322.0" r="1.55"/><circle cx="584.5" cy="322.0" r="1.55"/><circle cx="587.5" cy="322.0" r="1.55"/><circle cx="590.6" cy="322.0" r="1.55"/><circle cx="593.6" cy="322.0" r="1.55"/><circle cx="596.7" cy="322.0" r="1.55"/><circle cx="599.7" cy="322.0" r="1.55"/><circle cx="602.7" cy="303.1" r="1.55"/><circle cx="606.5" cy="303.1" r="1.55"/><circle cx="610.3" cy="303.1" r="1.55"/><circle cx="614.1" cy="303.1" r="1.55"/><circle cx="617.8" cy="303.1" r="1.55"/><circle cx="621.6" cy="303.1" r="1.55"/><circle cx="625.4" cy="303.1" r="1.55"/><circle cx="629.2" cy="303.1" r="1.55"/><circle cx="633.0" cy="303.1" r="1.55"/><circle cx="636.8" cy="303.1" r="1.55"/><circle cx="640.5" cy="303.1" r="1.55"/><circle cx="644.3" cy="303.1" r="1.55"/><circle cx="648.1" cy="303.1" r="1.55"/><circle cx="651.9" cy="303.1" r="1.55"/><circle cx="655.7" cy="303.1" r="1.55"/><circle cx="659.5" cy="303.1" r="1.55"/><circle cx="663.2" cy="303.1" r="1.55"/><circle cx="667.0" cy="303.1" r="1.55"/><circle cx="670.8" cy="303.1" r="1.55"/><circle cx="674.6" cy="303.1" r="1.55"/><circle cx="678.4" cy="303.1" r="1.55"/><circle cx="682.2" cy="303.1" r="1.55"/><circle cx="685.9" cy="303.1" r="1.55"/><circle cx="689.7" cy="303.1" r="1.55"/><circle cx="693.5" cy="303.1" r="1.55"/><circle cx="697.3" cy="303.1" r="1.55"/><circle cx="701.8" cy="283.3" r="1.55"/><circle cx="706.6" cy="283.3" r="1.55"/><circle cx="711.3" cy="283.3" r="1.55"/><circle cx="716.1" cy="283.3" r="1.55"/><circle cx="720.9" cy="283.3" r="1.55"/><circle cx="725.7" cy="283.3" r="1.55"/><circle cx="730.5" cy="283.3" r="1.55"/><circle cx="735.2" cy="283.3" r="1.55"/><circle cx="740.0" cy="283.3" r="1.55"/><circle cx="744.8" cy="283.3" r="1.55"/><circle cx="749.5" cy="283.3" r="1.55"/><circle cx="754.3" cy="283.3" r="1.55"/><circle cx="759.1" cy="283.3" r="1.55"/><circle cx="763.9" cy="283.3" r="1.55"/><circle cx="768.7" cy="283.3" r="1.55"/><circle cx="773.4" cy="283.3" r="1.55"/><circle cx="778.2" cy="283.3" r="1.55"/><circle cx="784.1" cy="264.1" r="1.55"/><circle cx="790.1" cy="264.1" r="1.55"/><circle cx="796.1" cy="264.1" r="1.55"/><circle cx="802.1" cy="264.1" r="1.55"/><circle cx="808.1" cy="264.1" r="1.55"/><circle cx="814.0" cy="264.1" r="1.55"/><circle cx="820.0" cy="264.1" r="1.55"/><circle cx="826.0" cy="264.1" r="1.55"/><circle cx="832.0" cy="264.1" r="1.55"/><circle cx="838.0" cy="264.1" r="1.55"/><circle cx="845.3" cy="245.7" r="1.55"/><circle cx="852.8" cy="245.7" r="1.55"/><circle cx="860.2" cy="245.7" r="1.55"/><circle cx="867.7" cy="245.7" r="1.55"/><circle cx="875.1" cy="245.7" r="1.55"/><circle cx="882.6" cy="245.7" r="1.55"/><circle cx="890.0" cy="245.7" r="1.55"/><circle cx="897.5" cy="245.7" r="1.55"/><circle cx="904.9" cy="245.7" r="1.55"/><circle cx="912.4" cy="245.7" r="1.55"/><circle cx="921.6" cy="226.9" r="1.55"/><circle cx="930.9" cy="226.9" r="1.55"/><circle cx="940.2" cy="226.9" r="1.55"/><circle cx="949.6" cy="226.9" r="1.55"/><circle cx="958.9" cy="226.9" r="1.55"/><circle cx="968.2" cy="226.9" r="1.55"/><circle cx="980.4" cy="203.3" r="1.55"/><circle cx="992.7" cy="203.3" r="1.55"/><circle cx="1005.0" cy="203.3" r="1.55"/><circle cx="1017.3" cy="203.3" r="1.55"/><circle cx="1029.6" cy="198.3" r="1.55"/><circle cx="1042.9" cy="198.3" r="1.55"/><circle cx="1056.3" cy="198.3" r="1.55"/><circle cx="1069.6" cy="198.3" r="1.55"/><circle cx="1075.0" cy="272.2" r="1.55"/></g>
<circle cx="421" cy="452.8" r="3.1" fill="#e8362c"/>
<text x="421.5" y="471.8" font-size="13.33" text-anchor="middle" fill="#262626">0</text><text x="486.5" y="471.8" font-size="13.33" text-anchor="middle" fill="#262626">0.01</text><text x="551.5" y="471.8" font-size="13.33" text-anchor="middle" fill="#262626">0.02</text><text x="617.5" y="471.8" font-size="13.33" text-anchor="middle" fill="#262626">0.03</text><text x="682.5" y="471.8" font-size="13.33" text-anchor="middle" fill="#262626">0.04</text><text x="748.5" y="471.8" font-size="13.33" text-anchor="middle" fill="#262626">0.05</text><text x="813.5" y="471.8" font-size="13.33" text-anchor="middle" fill="#262626">0.06</text><text x="878.5" y="471.8" font-size="13.33" text-anchor="middle" fill="#262626">0.07</text><text x="944.5" y="471.8" font-size="13.33" text-anchor="middle" fill="#262626">0.08</text><text x="1009.5" y="471.8" font-size="13.33" text-anchor="middle" fill="#262626">0.09</text><text x="1074.5" y="471.8" font-size="13.33" text-anchor="middle" fill="#262626">0.1</text>
<text x="391.5" y="263.7" font-size="13.33" fill="#262626" textLength="13.6" lengthAdjust="spacingAndGlyphs">10</text><text x="406.6" y="257.6" font-size="10.7" fill="#262626">-3</text>
<text x="391.5" y="458.9" font-size="13.33" fill="#262626" textLength="13.6" lengthAdjust="spacingAndGlyphs">10</text><text x="406" y="452.8" font-size="10.7" fill="#262626">-4</text>
<text x="719.2" y="490.8" font-size="13.33" fill="#262626" textLength="57.2" lengthAdjust="spacingAndGlyphs">time (sec)</text>
<text transform="translate(383.8,354.8) rotate(-90)" font-size="13.33" fill="#262626" textLength="59.6" lengthAdjust="spacingAndGlyphs">step (sec)</text>
<rect x="1098.5" y="351.5" width="141" height="101" fill="#fff" stroke="#262626" stroke-width="1"/>
<text x="1145.3" y="365.8" font-size="12" fill="#000">Step Size</text><text x="1145.3" y="382.1" font-size="12" fill="#000">Max Step Size</text><text x="1145.3" y="398.6" font-size="12" fill="#000">Zero Crossing</text><text x="1145.3" y="414.9" font-size="12" fill="#000">Solver Reset</text><text x="1145.3" y="431.7" font-size="12" fill="#000">Jacobian Update</text><text x="1145.3" y="448.1" font-size="12" fill="#000">Solver Exception</text>
<path d="M1102.5 360.6 H1142.5" stroke="#1414f0" stroke-width="1.1"/><circle cx="1122" cy="360.6" r="1.55" fill="#0a0ae6"/>
<path d="M1102.5 377.6 H1142.5" stroke="#000" stroke-width="3" stroke-dasharray="8 8"/>
<circle cx="1122" cy="393.8" r="3" fill="#eda512"/><circle cx="1122" cy="410.1" r="3" fill="#14992a"/><circle cx="1122" cy="426.9" r="3" fill="#000"/><circle cx="1122" cy="443.3" r="3" fill="#e8362c"/>
</svg>

<!-- BOTTOM -->
<div class="a" style="left:309px;top:499px;width:1013px;height:1px;background:#a3a3a3;"></div>
<div class="a" style="left:309px;top:499px;width:1px;height:305px;background:#b4b4b4;"></div>
<div class="a" style="left:309px;top:804px;width:1014px;height:1px;background:#fff;"></div>
<div class="a" style="left:310px;top:521px;width:1012px;height:283px;background:#f0f0f0;border:1px solid #386ba6;"></div>
<div class="a" style="left:311px;top:522px;width:1px;height:281px;background:#4a78ad;"></div>
<div class="a" style="left:311px;top:802px;width:1010px;height:1px;background:#6f86a3;"></div>
<div class="a" style="left:311px;top:521px;width:98px;height:1px;background:#a3a3a3;"></div>
<div class="a" style="left:558px;top:521px;width:98px;height:1px;background:#a3a3a3;"></div>
<div class="a" style="left:656px;top:521px;width:5px;height:1px;background:#c4c4c4;"></div>
<div class="a" style="left:311px;top:556px;width:1010px;height:247px;background:#fff;border-right:1px solid #8a8a8a;border-bottom:1px solid #8a8a8a;"></div>
<svg width="0" height="0" class="a"><defs><linearGradient id="tg1" x1="0" y1="0" x2="0" y2="1"><stop offset="0" stop-color="#dde7f2"/><stop offset="0.55" stop-color="#e6edf5"/><stop offset="1" stop-color="#ffffff"/></linearGradient><linearGradient id="tg2" x1="0" y1="0" x2="0" y2="1"><stop offset="0" stop-color="#d9d9d9"/><stop offset="1" stop-color="#e6e6e6"/></linearGradient></defs></svg>
<svg class="a" style="left:312px;top:499px" width="112" height="24" viewBox="312 499 112 24"><path d="M314.0 521.5 C316.5 521.5 318.5 520.0 318.5 517.5 L318.5 504.0 Q318.5 500.5 322.0 500.5 H415.0 Q418.5 500.5 418.5 504.0 L418.5 517.5 C418.5 520.0 420.5 521.5 423.0 521.5 Z" fill="url(#tg2)" stroke="none"/><path d="M314.0 521.5 C316.5 521.5 318.5 520.0 318.5 517.5 L318.5 504.0 Q318.5 500.5 322.0 500.5 H415.0 Q418.5 500.5 418.5 504.0 L418.5 517.5 C418.5 520.0 420.5 521.5 423.0 521.5" fill="none" stroke="#a0a0a0" stroke-width="1"/></svg>
<svg class="a" style="left:542px;top:499px" width="115" height="24" viewBox="542 499 115 24"><path d="M544.0 521.5 C546.5 521.5 548.5 520.0 548.5 517.5 L548.5 504.0 Q548.5 500.5 552.0 500.5 H648.0 Q651.5 500.5 651.5 504.0 L651.5 517.5 C651.5 520.0 653.5 521.5 656.0 521.5 Z" fill="url(#tg2)" stroke="none"/><path d="M544.0 521.5 C546.5 521.5 548.5 520.0 548.5 517.5 L548.5 504.0 Q548.5 500.5 552.0 500.5 H648.0 Q651.5 500.5 651.5 504.0 L651.5 517.5 C651.5 520.0 653.5 521.5 656.0 521.5" fill="none" stroke="#a0a0a0" stroke-width="1"/></svg>
<svg class="a" style="left:412px;top:499px" width="142" height="24" viewBox="412 499 142 24"><path d="M414.0 521.5 C416.5 521.5 418.5 520.0 418.5 517.5 L418.5 504.0 Q418.5 500.5 422.0 500.5 H545.0 Q548.5 500.5 548.5 504.0 L548.5 517.5 C548.5 520.0 550.5 521.5 553.0 521.5 Z" fill="url(#tg1)" stroke="none"/><path d="M414.0 521.5 C416.5 521.5 418.5 520.0 418.5 517.5 L418.5 504.0 Q418.5 500.5 422.0 500.5 H545.0 Q548.5 500.5 548.5 504.0 L548.5 517.5 C548.5 520.0 550.5 521.5 553.0 521.5" fill="none" stroke="#386ba6" stroke-width="1.2"/></svg>
<div class="t" style="left:332.20px;top:505.00px;font-size:12px;letter-spacing:-0.175px;color:#505050;">Suggestion</div>
<div class="t" style="left:431.10px;top:505.00px;font-size:12px;letter-spacing:-0.228px;color:#000;">Solver Exception</div>
<div class="t" style="left:558.10px;top:505.00px;font-size:12px;letter-spacing:-0.500px;color:#505050;">Solver Reset</div>
<div class="t" style="left:338.40px;top:535.00px;font-size:12px;letter-spacing:-0.063px;color:#000;">Rank States By:</div>
<div class="a" style="left:452px;top:529px;width:201px;height:23px;background:#fff;border:1px solid #adadad;"></div>
<div class="a" style="left:637px;top:530px;width:15px;height:21px;background:#e1e1e1;"></div>
<svg class="a" style="left:639px;top:537px" width="10" height="7" viewBox="0 0 10 7"><path d="M1 1.6 L5 5.6 L9 1.6" fill="none" stroke="#404040" stroke-width="1.1"/></svg>
<div class="t" style="left:455.40px;top:535.00px;font-size:12px;letter-spacing:0.073px;color:#000;">Total solver exception</div>
<div class="a" style="left:311px;top:556px;width:1008px;height:21px;background:#f0f0f0;border-top:1px solid #a0a0a0;border-bottom:1px solid #a0a0a0;"></div>
<div class="a" style="left:356px;top:557px;width:1px;height:19px;background:#a0a0a0;"></div>
<div class="a" style="left:356px;top:577px;width:1px;height:18px;background:#ededed;"></div>
<div class="a" style="left:451px;top:557px;width:1px;height:19px;background:#a0a0a0;"></div>
<div class="a" style="left:451px;top:577px;width:1px;height:18px;background:#ededed;"></div>
<div class="a" style="left:566px;top:557px;width:1px;height:19px;background:#a0a0a0;"></div>
<div class="a" style="left:566px;top:577px;width:1px;height:18px;background:#ededed;"></div>
<div class="a" style="left:661px;top:557px;width:1px;height:19px;background:#a0a0a0;"></div>
<div class="a" style="left:661px;top:577px;width:1px;height:18px;background:#ededed;"></div>
<div class="a" style="left:781px;top:557px;width:1px;height:19px;background:#a0a0a0;"></div>
<div class="a" style="left:781px;top:577px;width:1px;height:18px;background:#ededed;"></div>
<div class="a" style="left:821px;top:557px;width:1px;height:19px;background:#a0a0a0;"></div>
<div class="a" style="left:821px;top:577px;width:1px;height:18px;background:#ededed;"></div>
<div class="a" style="left:1318px;top:557px;width:1px;height:19px;background:#a0a0a0;"></div>
<div class="a" style="left:1318px;top:577px;width:1px;height:18px;background:#ededed;"></div>
<div class="a" style="left:311px;top:594px;width:1008px;height:1px;background:#ededed;"></div>
<div class="t" style="left:321.50px;top:562.00px;font-size:12px;letter-spacing:-0.050px;color:#000;">Total</div>
<div class="t" style="left:370.20px;top:562.00px;font-size:12px;letter-spacing:-0.106px;color:#000;">Error Control</div>
<div class="t" style="left:465.60px;top:562.00px;font-size:12px;letter-spacing:0.045px;color:#000;">Newton Iteration</div>
<div class="t" style="left:581.20px;top:562.00px;font-size:12px;letter-spacing:-0.051px;color:#000;">Infinite State</div>
<div class="t" style="left:675.90px;top:562.00px;font-size:12px;letter-spacing:0.014px;color:#000;">Infinite Derivative</div>
<div class="t" style="left:791.40px;top:562.00px;font-size:12px;letter-spacing:-1.191px;color:#000;">DAE</div>
<div class="t" style="left:1039.70px;top:562.00px;font-size:12px;letter-spacing:-0.167px;color:#000;">Model State</div>
<div class="t" style="left:313.30px;top:580.00px;font-size:12px;color:#000;">3</div>
<div class="t" style="left:358.60px;top:580.00px;font-size:12px;color:#000;">3</div>
<div class="t" style="left:453.60px;top:580.00px;font-size:12px;color:#000;">0</div>
<div class="t" style="left:568.60px;top:580.00px;font-size:12px;color:#000;">0</div>
<div class="t" style="left:663.60px;top:580.00px;font-size:12px;color:#000;">0</div>
<div class="t" style="left:783.60px;top:580.00px;font-size:12px;color:#000;">0</div>
<div class="t" style="left:823.60px;top:580.00px;font-size:12px;letter-spacing:0.352px;color:#000;">massSpringDamperNominal.m.v</div>
<div class="a" style="left:1320px;top:820px;width:2px;height:2px;background:#b8b4a0;"></div>
<div class="a" style="left:1316px;top:824px;width:2px;height:2px;background:#b8b4a0;"></div>
<div class="a" style="left:1320px;top:824px;width:2px;height:2px;background:#b8b4a0;"></div>
<div class="a" style="left:1312px;top:828px;width:2px;height:2px;background:#b8b4a0;"></div>
<div class="a" style="left:1316px;top:828px;width:2px;height:2px;background:#b8b4a0;"></div>
<div class="a" style="left:1320px;top:828px;width:2px;height:2px;background:#b8b4a0;"></div>

</body>
</html>
